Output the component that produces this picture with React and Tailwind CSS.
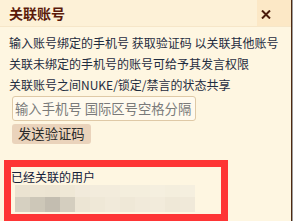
import React from "react";

const cjk = { fontFamily: '"Noto Sans CJK SC", "Noto Sans", sans-serif' };

const mosaicTop = [
  "#ebe3d1", "#ede5d3", "#ece4d2", "#efe8d6", "#f1eadb", "#f3ecdc",
  "#f3ecdc", "#f4eedd", "#f4eedd", "#f5efdf", "#f4eedd", "#f5efdf",
];
const mosaicBottom = [
  "#d6d0c1", "#cdc7b8", "#c3bdb0", "#d4cebf", "#ece5d4", "#efe8d7",
  "#f1eada", "#efe8d7", "#f1eada", "#f2ebdb", "#efe8d7", "#f0e9d9",
];

export default function App() {
  return (
    <div className="flex w-[293px] h-[221px] overflow-hidden" style={cjk}>
      <div className="flex-1 flex flex-col bg-[#fef6e1] border-r border-[#4f2a12]">
        {/* Header */}
        <div className="flex h-[27px] bg-[#fdf1d7] border-b border-[#f6e6c8]">
          <div className="flex-1 pl-[9px] pt-[3px] text-[14px] leading-[20px] font-bold text-[#5b1a0b]">
            关联账号
          </div>
          <button className="w-[34px] h-full bg-[#fce8c6] flex items-start pl-[4px] pt-[10px]">
            <svg width="10" height="9" viewBox="0 0 10 9">
              <path d="M1 0.5 L9 8.5 M9 0.5 L1 8.5" stroke="#4a1c0c" strokeWidth="2" />
            </svg>
          </button>
        </div>

        {/* Body */}
        <div className="flex flex-col pt-[5px] text-[12px] leading-[21px] text-[#1e2c40]">
          <div className="pl-[9px]">输入账号绑定的手机号 获取验证码 以关联其他账号</div>
          <div className="pl-[9px]">关联未绑定的手机号的账号可给予其发言权限</div>
          <div className="pl-[9px]">关联账号之间NUKE/锁定/禁言的状态共享</div>

          <input
            className="ml-[12px] mt-[1px] w-[184px] h-[25px] px-[2px] rounded-[3px] border border-[#dfc9a6] bg-[#fffaee] text-[13.33px] placeholder:text-[#7a7a7a] outline-none"
            placeholder="输入手机号 国际区号空格分隔"
            style={cjk}
          />
          <div className="pl-[12px] mt-[2px]">
            <button
              className="h-[20px] px-[6px] rounded-[3px] bg-[#ead3bb] text-[13.33px] leading-[20px] text-[#2b2b2b]"
              style={cjk}
            >
              发送验证码
            </button>
          </div>

          {/* Linked users */}
          <div className="ml-[4px] mt-[16px] w-[224px] h-[61px] border-[7px] border-[#fe3535]">
            <div className="leading-[16px] pt-[2px] text-[#14203a]">已经关联的用户</div>
            <div className="ml-[4px] flex flex-col">
              <div className="flex">
                {mosaicTop.map((c, i) => (
                  <div key={i} className="w-[15px] h-[12px]" style={{ background: c }} />
                ))}
              </div>
              <div className="flex">
                {mosaicBottom.map((c, i) => (
                  <div key={i} className="w-[15px] h-[15px]" style={{ background: c }} />
                ))}
              </div>
            </div>
          </div>
        </div>
      </div>
      <div className="w-px bg-[#9c9c9c]" />
    </div>
  );
}
